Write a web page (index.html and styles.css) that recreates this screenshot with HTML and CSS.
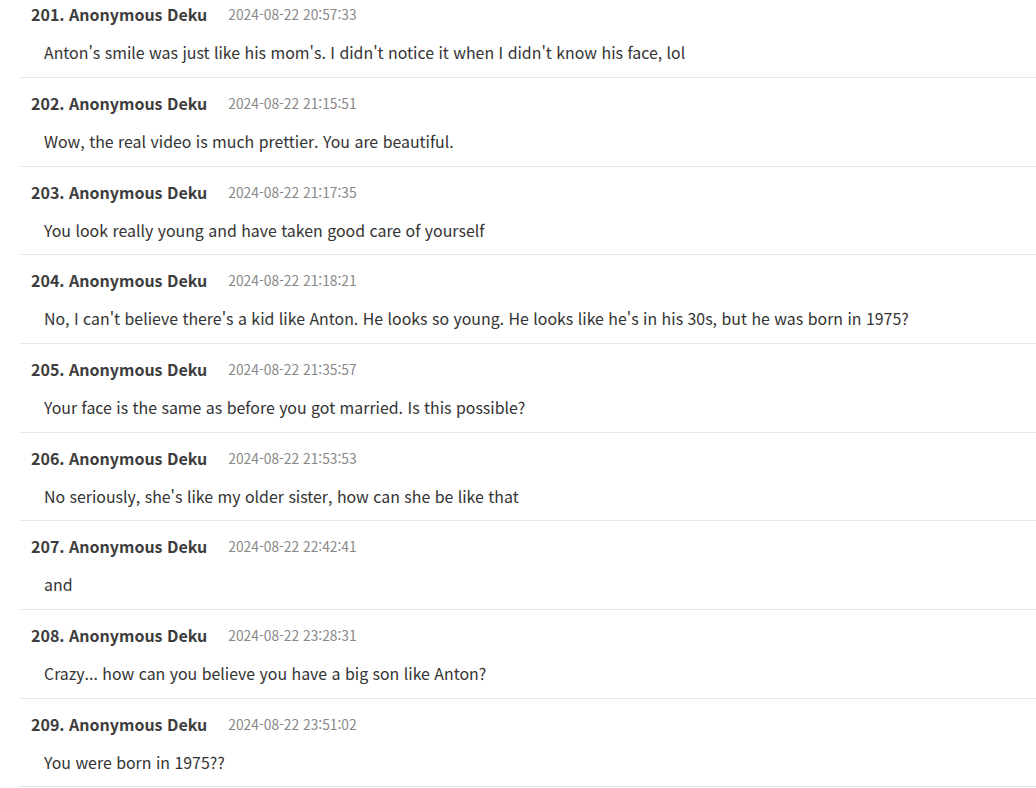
FILE: index.html
```html
<!DOCTYPE html>
<html lang="ko">
<head>
    <meta charset="UTF-8">
    <meta name="viewport" content="width=device-width, initial-scale=1.0">
    <title>댓글</title>
    <link rel="stylesheet" href="styles.css">
</head>
<body>
    <div class="comment-list">
        <div class="comment">
            <div class="comment-head">
                <span class="comment-name">201. Anonymous Deku</span>
                <span class="comment-date">2024-08-22 20:57:33</span>
            </div>
            <div class="comment-body">Anton's smile was just like his mom's. I didn't notice it when I didn't know his face, lol</div>
        </div>
        <div class="comment">
            <div class="comment-head">
                <span class="comment-name">202. Anonymous Deku</span>
                <span class="comment-date">2024-08-22 21:15:51</span>
            </div>
            <div class="comment-body">Wow, the real video is much prettier. You are beautiful.</div>
        </div>
        <div class="comment">
            <div class="comment-head">
                <span class="comment-name">203. Anonymous Deku</span>
                <span class="comment-date">2024-08-22 21:17:35</span>
            </div>
            <div class="comment-body">You look really young and have taken good care of yourself</div>
        </div>
        <div class="comment">
            <div class="comment-head">
                <span class="comment-name">204. Anonymous Deku</span>
                <span class="comment-date">2024-08-22 21:18:21</span>
            </div>
            <div class="comment-body">No, I can't believe there's a kid like Anton. He looks so young. He looks like he's in his 30s, but he was born in 1975?</div>
        </div>
        <div class="comment">
            <div class="comment-head">
                <span class="comment-name">205. Anonymous Deku</span>
                <span class="comment-date">2024-08-22 21:35:57</span>
            </div>
            <div class="comment-body">Your face is the same as before you got married. Is this possible?</div>
        </div>
        <div class="comment">
            <div class="comment-head">
                <span class="comment-name">206. Anonymous Deku</span>
                <span class="comment-date">2024-08-22 21:53:53</span>
            </div>
            <div class="comment-body">No seriously, she's like my older sister, how can she be like that</div>
        </div>
        <div class="comment">
            <div class="comment-head">
                <span class="comment-name">207. Anonymous Deku</span>
                <span class="comment-date">2024-08-22 22:42:41</span>
            </div>
            <div class="comment-body">and</div>
        </div>
        <div class="comment">
            <div class="comment-head">
                <span class="comment-name">208. Anonymous Deku</span>
                <span class="comment-date">2024-08-22 23:28:31</span>
            </div>
            <div class="comment-body">Crazy... how can you believe you have a big son like Anton?</div>
        </div>
        <div class="comment">
            <div class="comment-head">
                <span class="comment-name">209. Anonymous Deku</span>
                <span class="comment-date">2024-08-22 23:51:02</span>
            </div>
            <div class="comment-body">You were born in 1975??</div>
        </div>
    </div>
</body>
</html>
```

FILE: styles.css
```css
* {
    margin: 0;
    padding: 0;
    box-sizing: border-box;
}

body {
    font-family: 'Noto Sans CJK KR', 'Noto Sans', sans-serif;
    background: #fff;
    color: #333;
    overflow: hidden;
}

.comment-list {
    margin-top: -10.67px;
    margin-left: 19px;
}

.comment {
    border-bottom: 1px solid #e8e8e8;
    padding: 15px 0 11.67px 12px;
}

.comment-head {
    display: flex;
    align-items: center;
    height: 20px;
}

.comment-name {
    font-size: 16px;
    font-weight: bold;
    color: #3d3d3d;
}

.comment-date {
    margin-left: 21px;
    font-size: 13.8px;
    color: #888;
}

.comment-body {
    margin-top: 17px;
    margin-left: 13px;
    font-size: 15.9px;
    line-height: 24px;
    color: #333;
}
```
